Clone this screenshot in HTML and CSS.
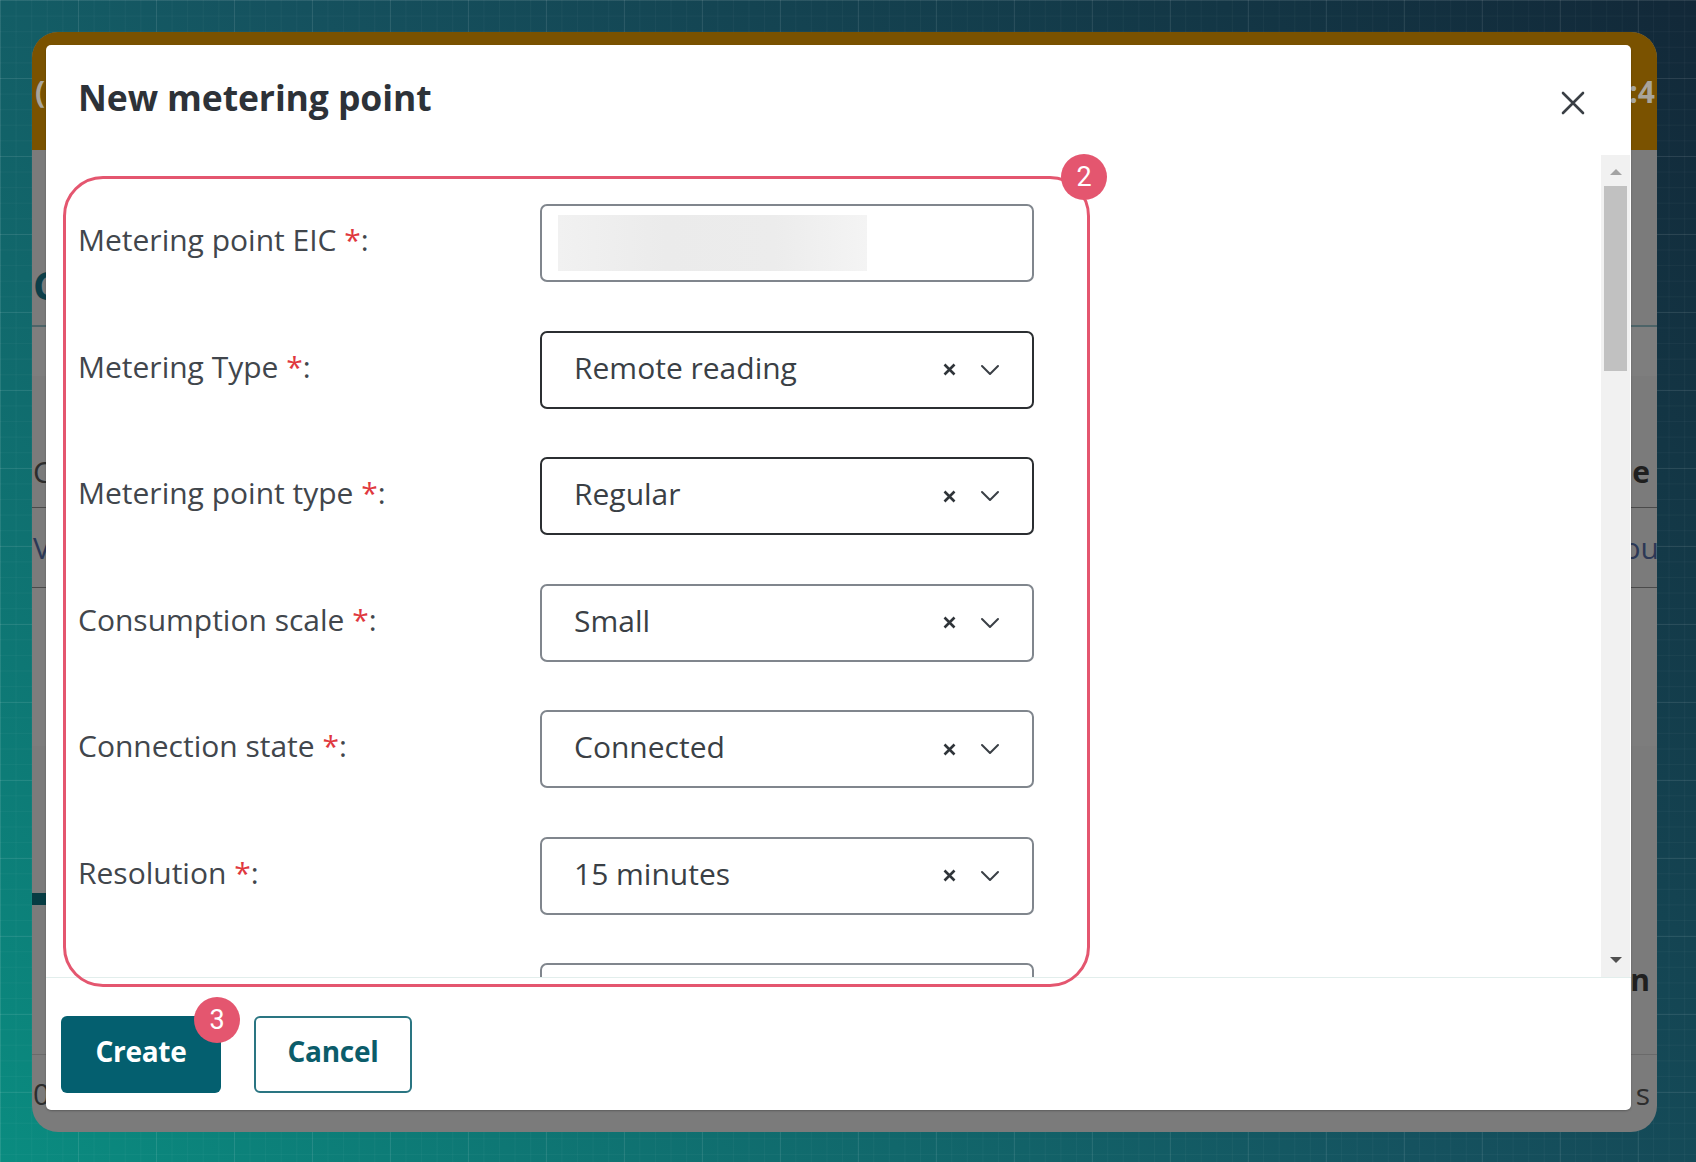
FILE: index.html
```html
<!DOCTYPE html>
<html lang="en">
<head>
<meta charset="utf-8">
<title>New metering point</title>
<link rel="stylesheet" href="styles.css">
</head>
<body>
<div class="screen">
  <div class="app">
    <header class="app-top">
      <span class="top-left">(</span>
      <span class="top-right">13:4</span>
    </header>
    <div class="app-body">
      <div class="bg-row row-a"><span class="bg-heading">C</span></div>
      <div class="bg-row row-b"></div>
      <div class="bg-row row-c"><span class="bg-text">C</span><span class="bg-text bold">e</span></div>
      <div class="bg-row row-d"><span class="bg-text navy">V</span><span class="bg-text navy edge">ou</span></div>
      <div class="bg-row row-e"></div>
      <div class="bg-row row-f"></div>
      <div class="bg-row row-g"><span class="tab-bar"></span></div>
      <div class="bg-row row-h"><span></span><span class="bg-text bold">n</span></div>
      <div class="bg-row row-i"><span class="bg-text">0</span><span class="bg-text">s</span></div>
    </div>

    <div class="modal">
      <div class="modal-header">
        <h1 class="modal-title">New metering point</h1>
        <button class="close-btn" aria-label="Close">
          <svg width="24" height="24" viewBox="0 0 24 24"><path d="M2 2 L22 22 M22 2 L2 22" stroke="#3a3f45" stroke-width="2.6" stroke-linecap="round" fill="none"/></svg>
        </button>
      </div>
      <div class="modal-body">
        <div class="form">
          <div class="label">Metering point EIC <span class="req">*</span>:</div>
          <div class="field"><span class="redacted"></span></div>

          <div class="label">Metering Type <span class="req">*</span>:</div>
          <div class="field dark"><span class="value">Remote reading</span><span class="clear"><svg width="13" height="13" viewBox="0 0 13 13"><path d="M1.5 1.5 L11.5 11.5 M11.5 1.5 L1.5 11.5" stroke="#2f3439" stroke-width="2.6" fill="none"/></svg></span><span class="chev"><svg width="20" height="12" viewBox="0 0 20 12"><path d="M2 2 L10 10 L18 2" stroke="#3a3f45" stroke-width="2" fill="none" stroke-linecap="round" stroke-linejoin="round"/></svg></span></div>

          <div class="label">Metering point type <span class="req">*</span>:</div>
          <div class="field dark"><span class="value">Regular</span><span class="clear"><svg width="13" height="13" viewBox="0 0 13 13"><path d="M1.5 1.5 L11.5 11.5 M11.5 1.5 L1.5 11.5" stroke="#2f3439" stroke-width="2.6" fill="none"/></svg></span><span class="chev"><svg width="20" height="12" viewBox="0 0 20 12"><path d="M2 2 L10 10 L18 2" stroke="#3a3f45" stroke-width="2" fill="none" stroke-linecap="round" stroke-linejoin="round"/></svg></span></div>

          <div class="label">Consumption scale <span class="req">*</span>:</div>
          <div class="field"><span class="value">Small</span><span class="clear"><svg width="13" height="13" viewBox="0 0 13 13"><path d="M1.5 1.5 L11.5 11.5 M11.5 1.5 L1.5 11.5" stroke="#2f3439" stroke-width="2.6" fill="none"/></svg></span><span class="chev"><svg width="20" height="12" viewBox="0 0 20 12"><path d="M2 2 L10 10 L18 2" stroke="#3a3f45" stroke-width="2" fill="none" stroke-linecap="round" stroke-linejoin="round"/></svg></span></div>

          <div class="label">Connection state <span class="req">*</span>:</div>
          <div class="field"><span class="value">Connected</span><span class="clear"><svg width="13" height="13" viewBox="0 0 13 13"><path d="M1.5 1.5 L11.5 11.5 M11.5 1.5 L1.5 11.5" stroke="#2f3439" stroke-width="2.6" fill="none"/></svg></span><span class="chev"><svg width="20" height="12" viewBox="0 0 20 12"><path d="M2 2 L10 10 L18 2" stroke="#3a3f45" stroke-width="2" fill="none" stroke-linecap="round" stroke-linejoin="round"/></svg></span></div>

          <div class="label">Resolution <span class="req">*</span>:</div>
          <div class="field"><span class="value">15 minutes</span><span class="clear"><svg width="13" height="13" viewBox="0 0 13 13"><path d="M1.5 1.5 L11.5 11.5 M11.5 1.5 L1.5 11.5" stroke="#2f3439" stroke-width="2.6" fill="none"/></svg></span><span class="chev"><svg width="20" height="12" viewBox="0 0 20 12"><path d="M2 2 L10 10 L18 2" stroke="#3a3f45" stroke-width="2" fill="none" stroke-linecap="round" stroke-linejoin="round"/></svg></span></div>

          <div class="label">Grid area <span class="req">*</span>:</div>
          <div class="field"><span class="value"></span></div>
        </div>
        <div class="scrollbar">
          <span class="arrow-up"></span>
          <span class="thumb"></span>
          <span class="track-fill"></span>
          <span class="arrow-down"></span>
        </div>
      </div>
      <div class="modal-footer">
        <button class="btn btn-primary">Create</button>
        <button class="btn btn-secondary">Cancel</button>
      </div>
    </div>
  </div>

  <div class="annot-box"></div>
  <div class="badge badge-2">2</div>
  <div class="badge badge-3">3</div>
</div>
</body>
</html>
```

FILE: styles.css
```css
* { box-sizing: border-box; margin: 0; padding: 0; }

html, body {
  width: 1696px;
  height: 1162px;
  overflow: hidden;
}

body {
  font-family: "Open Sans", "Noto Sans", sans-serif;
}

.screen {
  position: relative;
  width: 1696px;
  height: 1162px;
  padding: 32px 39px 30px 32px;
  background:
    linear-gradient(rgba(255,255,255,0.075) 1px, transparent 1px) 0 0 / 78px 78px,
    linear-gradient(90deg, rgba(255,255,255,0.075) 1px, transparent 1px) 0 0 / 78px 78px,
    linear-gradient(rgba(255,255,255,0.03) 1px, transparent 1px) 0 0 / 15.6px 15.6px,
    linear-gradient(90deg, rgba(255,255,255,0.03) 1px, transparent 1px) 0 0 / 15.6px 15.6px,
    linear-gradient(45deg, #0a8c80 0%, #15525f 50%, #122838 100%);
}

/* ---------- backdrop app (dimmed) ---------- */
.app {
  position: relative;
  width: 1625px;
  height: 1100px;
  border-radius: 26px;
  overflow: hidden;
  background: #7b7b7b;
  display: flex;
  flex-direction: column;
}

.app-top {
  height: 118px;
  flex: none;
  background: #7a5200;
  display: flex;
  justify-content: space-between;
  align-items: center;
  font-weight: 700;
  font-size: 30px;
  color: #a9a59c;
  padding: 0 2px 0 3px;
}

.app-body {
  display: flex;
  flex-direction: column;
}

.bg-row {
  display: flex;
  justify-content: space-between;
  align-items: center;
  padding: 0 7px 0 1px;
  flex: none;
}

.row-a { height: 177px; align-items: flex-end; padding-bottom: 20px; border-bottom: 2px solid #4d6468; }
.row-b { height: 49px; background: #7e7e7e; }
.row-c { height: 132px; align-items: flex-end; padding-bottom: 20px; border-bottom: 1px solid #4a4a4a; }
.row-d { height: 80px; border-bottom: 1px solid #4a4a4a; }
.row-e { height: 158px; background: #7d7d7d; }
.row-f { height: 147px; }
.row-g { height: 12px; padding: 0; }
.row-h { height: 150px; border-bottom: 1px solid #6a6a6a; }
.row-i { height: 77px; }

.bg-heading {
  font-size: 40px;
  font-weight: 700;
  color: #0d3f49;
  line-height: 1;
}

.bg-text {
  font-size: 30px;
  color: #2d2d2d;
  line-height: 1;
}
.bg-text.bold { font-weight: 700; color: #1f1f1f; }
.bg-text.navy { color: #2c3856; }
.bg-text.edge { margin-right: -9px; }

.tab-bar {
  display: block;
  width: 20px;
  height: 12px;
  background: #063c43;
}

/* ---------- modal ---------- */
.modal {
  position: absolute;
  left: 14px;
  top: 13px;
  width: 1585px;
  height: 1065px;
  background: #fff;
  border-radius: 5px;
  box-shadow: 0 1px 2px rgba(0,0,0,0.25);
  display: flex;
  flex-direction: column;
}

.modal-header {
  height: 110px;
  flex: none;
  display: flex;
  align-items: center;
  justify-content: space-between;
  padding: 0 46px 0 32px;
}

.modal-title {
  font-size: 35.5px;
  font-weight: 700;
  color: #2d3238;
  letter-spacing: -0.1px;
  margin-top: -7px;
}

.close-btn {
  border: 0;
  background: transparent;
  width: 24px;
  height: 24px;
  display: flex;
  margin-top: 6px;
}

.modal-body {
  height: 822px;
  flex: none;
  display: flex;
}

.form {
  flex: 1;
  overflow: hidden;
  padding: 49px 0 0 32px;
  display: grid;
  grid-template-columns: 462px 494px;
  grid-auto-rows: 78px;
  row-gap: 48.5px;
  align-content: start;
  align-items: center;
}

.label {
  font-size: 30px;
  color: #41464c;
  line-height: 1;
  padding-bottom: 6px;
}

.req { color: #e0383e; }

.field {
  height: 78px;
  border: 2px solid #80868d;
  border-radius: 7px;
  display: flex;
  align-items: center;
  padding: 0 32px 0 32px;
}

.field.dark { border-color: #2b2e31; }

.redacted {
  display: block;
  width: 309px;
  height: 56px;
  margin-left: -16px;
  background: linear-gradient(90deg, #f1f1f1 0%, #ebebeb 35%, #ececec 70%, #f4f4f4 100%);
}

.value {
  flex: 1;
  font-size: 30px;
  color: #3a3f45;
  line-height: 1;
  padding-bottom: 4px;
}

.clear {
  display: flex;
  width: 13px;
  margin-right: 24px;
}

.chev {
  display: flex;
  width: 20px;
}

/* fake scrollbar */
.scrollbar {
  width: 29px;
  margin-right: 1px;
  background: #f1f1f1;
  display: flex;
  flex-direction: column;
  align-items: center;
}

.arrow-up {
  margin-top: 14px;
  width: 0;
  height: 0;
  border-left: 6px solid transparent;
  border-right: 6px solid transparent;
  border-bottom: 6px solid #a3a3a3;
}

.thumb {
  margin-top: 11px;
  width: 23px;
  height: 185px;
  background: #c1c1c1;
}

.track-fill { flex: 1; }

.arrow-down {
  margin-bottom: 14px;
  width: 0;
  height: 0;
  border-left: 6px solid transparent;
  border-right: 6px solid transparent;
  border-top: 6px solid #505050;
}

.modal-footer {
  flex: 1;
  border-top: 1px solid #e2eeec;
  display: flex;
  align-items: flex-start;
  gap: 33px;
  padding: 38px 0 0 15px;
}

.btn {
  height: 77px;
  border-radius: 6px;
  font-family: "Open Sans", "Noto Sans", sans-serif;
  font-size: 28px;
  font-weight: 700;
  letter-spacing: -0.3px;
  padding-bottom: 8px;
}

.btn-primary {
  width: 160px;
  background: #045f6f;
  color: #fff;
  border: 0;
}

.btn-secondary {
  width: 158px;
  background: #fff;
  color: #0b5c6a;
  border: 2px solid #2a7582;
}

/* ---------- annotations ---------- */
.annot-box {
  position: absolute;
  left: 63px;
  top: 176px;
  width: 1027px;
  height: 811px;
  border: 3px solid #e4566f;
  border-radius: 40px;
  pointer-events: none;
}

.badge {
  position: absolute;
  width: 46px;
  height: 46px;
  border-radius: 50%;
  background: #e4566f;
  color: #fff;
  font-family: Roboto, "Open Sans", sans-serif;
  font-size: 27px;
  display: flex;
  align-items: center;
  justify-content: center;
}

.badge-2 { left: 1061px; top: 154px; }
.badge-3 { left: 194px; top: 997px; }
```
